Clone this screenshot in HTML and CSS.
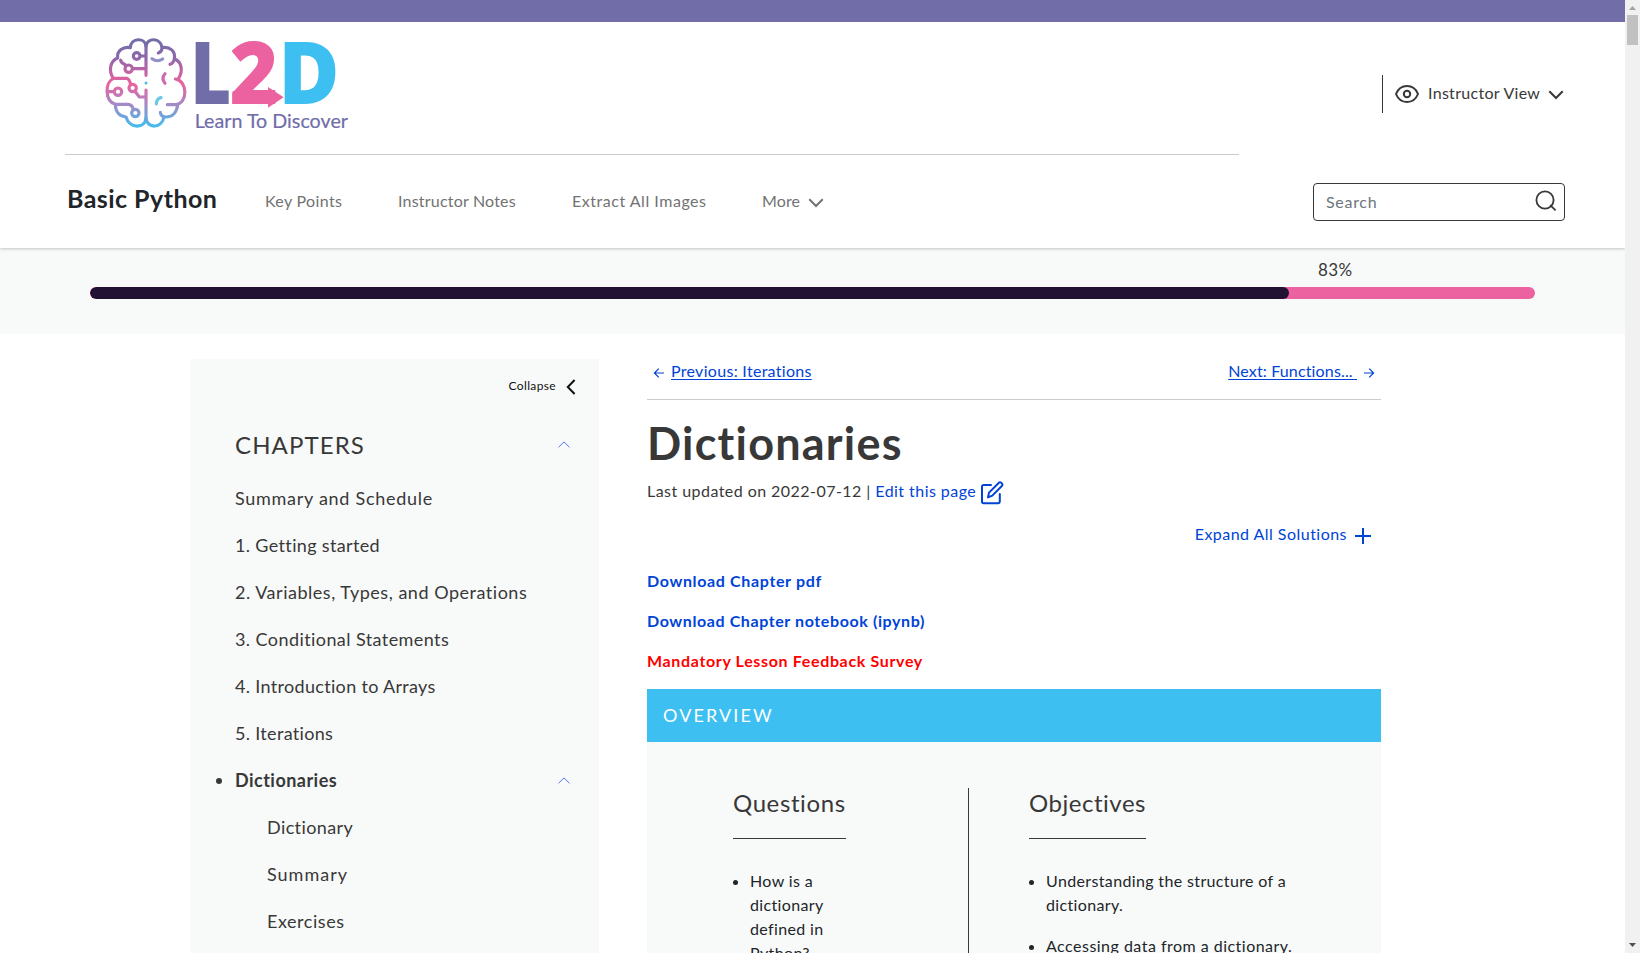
FILE: index.html
```html
<!DOCTYPE html>
<html lang="en">
<head>
<meta charset="utf-8">
<title>Basic Python: Dictionaries</title>
<link rel="stylesheet" href="styles.css">
</head>
<body>
<div class="window">
<div class="page">
  <header class="header">
    <div class="topbar"></div>
    <div class="brand-row">
      <svg class="logo" viewBox="0 6 840 390" role="img" aria-label="L2D Learn To Discover">
        <defs>
          <linearGradient id="brain" gradientUnits="userSpaceOnUse" x1="0" y1="20" x2="0" y2="288">
            <stop offset="0" stop-color="#706da9"/>
            <stop offset="0.2" stop-color="#8c68aa"/>
            <stop offset="0.5" stop-color="#ec619f"/>
            <stop offset="0.72" stop-color="#a788c4"/>
            <stop offset="1" stop-color="#3dbff1"/>
          </linearGradient>
        </defs>
        <g transform="translate(30 37)" fill="none" stroke="url(#brain)" stroke-width="9.5" stroke-linecap="round" stroke-linejoin="round">
          <path d="M138 129V42C136 14 92 16 91 46C70 42 50 55 53 77C31 86 24 114 40 138C14 150 14 206 46 216C46 240 60 253 78 254C88 290 136 290 138 256V173"/>
          <path d="M138 42C140 14 184 16 186 47C186 55 182 60 175 62M186 46C210 42 227 57 223 78C222 88 217 94 210 96M223 79C245 88 250 114 236 138M226 140C262 144 266 214 226 217H202M233 216C231 240 217 254 198 254C188 254 181 248 181 240M192 253C186 290 140 290 138 256"/>
          <circle cx="110" cy="71" r="10"/><path d="M121 71H136"/>
          <circle cx="86" cy="109" r="11"/><path d="M98 109H136M62 83C62 94 74 94 78 100"/>
          <circle cx="54" cy="178" r="11"/><path d="M24 178H42"/>
          <path d="M42 138H80Q88 140 92 156"/><circle cx="98" cy="167" r="11"/><path d="M105 177L118 194H136"/>
          <path d="M48 216H84Q96 216 100 231"/><circle cx="106" cy="242" r="11"/>
          <path stroke="#9290c8" d="M156 79Q172 91 188 80"/>
          <path stroke="#c96bb0" d="M195 124Q183 138 195 153"/>
          <path stroke="#6cc8e6" d="M183 196Q170 198 169 215"/>
        </g>
        <circle cx="168" cy="189" r="4.5" fill="#4ab8e0"/>
        <text class="logo-letter logo-purple" x="301" y="251" textLength="123" lengthAdjust="spacingAndGlyphs">L</text>
        <text class="logo-letter logo-pink" x="419" y="251" textLength="146" lengthAdjust="spacingAndGlyphs">2</text>
        <text class="logo-letter logo-blue" x="565" y="251" textLength="184" lengthAdjust="spacingAndGlyphs">D</text>
        <path class="logo-pink" d="M428 213H534V201L581 232L534 263V251H428z"/>
        <text class="logo-tag logo-purple" x="314" y="323" textLength="460" lengthAdjust="spacingAndGlyphs">Learn To Discover</text>
      </svg>
      <div class="view-switch">
        <svg width="24" height="20" viewBox="0 0 24 20" fill="none" stroke="#383838" stroke-width="2"><path d="M1 10C3 5 7 2 12 2S21 5 23 10C21 15 17 18 12 18S3 15 1 10z"/><circle cx="12" cy="10" r="3.2"/></svg>
        <span class="view-label">Instructor View</span>
        <svg class="chev" width="16" height="10" viewBox="0 0 16 10" fill="none" stroke="#383838" stroke-width="2"><path d="M1.3 1.3L8 8L14.7 1.3"/></svg>
      </div>
    </div>
    <div class="rule"></div>
    <nav class="nav-row">
      <span class="title">Basic Python</span>
      <a class="nav-link n1">Key Points</a>
      <a class="nav-link n2">Instructor Notes</a>
      <a class="nav-link n3">Extract All Images</a>
      <a class="nav-link n4">More <svg width="16" height="10" viewBox="0 0 16 10" fill="none" stroke="#727272" stroke-width="2"><path d="M1.3 1.3L8 8L14.7 1.3"/></svg></a>
      <div class="search"><span>Search</span>
        <svg width="22" height="22" viewBox="0 0 22 22" fill="none" stroke="#383838" stroke-width="1.8"><circle cx="10" cy="10" r="8.6"/><path d="M15.2 15.2L20.6 20.4"/></svg>
      </div>
    </nav>
  </header>

  <section class="progress-wrap">
    <div class="pct">83%</div>
    <div class="track"><div class="fill" style="width:83%"></div></div>
  </section>

  <div class="body-row">
    <aside class="sidebar">
      <div class="collapse">Collapse <svg width="10" height="16" viewBox="0 0 10 16" fill="none" stroke="#111" stroke-width="2"><path d="M8.6 1L1.8 8L8.6 15"/></svg></div>
      <div class="chapters"><span>CHAPTERS</span><svg class="caret" width="12" height="7" viewBox="0 0 12 7"><path d="M.5 6.3L6 .9L11.5 6.3"/></svg></div>
      <ul class="toc">
        <li class="t1">Summary and Schedule</li>
        <li>1. Getting started</li>
        <li class="t3">2. Variables, Types, and Operations</li>
        <li class="t4">3. Conditional Statements</li>
        <li class="t5">4. Introduction to Arrays</li>
        <li class="t5">5. Iterations</li>
        <li class="current"><span>Dictionaries</span><svg class="caret" width="12" height="7" viewBox="0 0 12 7"><path d="M.5 6.3L6 .9L11.5 6.3"/></svg></li>
        <li class="sub">Dictionary</li>
        <li class="sub s2">Summary</li>
        <li class="sub s3">Exercises</li>
      </ul>
    </aside>

    <main class="main">
      <div class="pager">
        <a class="pg"><svg width="12" height="12" viewBox="0 0 12 12"><path d="M11 6H1.6M5.8 1.6L1.4 6L5.8 10.4"/></svg><span class="link prev">Previous: Iterations</span></a>
        <a class="pg"><span class="link next">Next: Functions...&nbsp;</span><svg width="12" height="12" viewBox="0 0 12 12"><path d="M1 6H10.4M6.2 1.6L10.6 6L6.2 10.4"/></svg></a>
      </div>
      <h1>Dictionaries</h1>
      <div class="meta"><span>Last updated on 2022-07-12 |&nbsp;</span><a class="edit">Edit this page</a>
        <svg width="24" height="24" viewBox="0 0 24 24" fill="none" stroke="#0044d7" stroke-width="2" stroke-linecap="round" stroke-linejoin="round"><path d="M11 4H3.5A1.6 1.6 0 0 0 2 5.6V20.6A1.6 1.6 0 0 0 3.6 22.2H18.2A1.6 1.6 0 0 0 19.8 20.6V13"/><path d="M18.4 2.2A1.95 1.95 0 0 1 21.8 5L12.3 14.6L8 16.4L9 11.6z"/></svg>
      </div>
      <div class="expand">Expand All Solutions <svg width="16" height="16" viewBox="0 0 16 16"><path d="M0 8H16M8 0V16"/></svg></div>
      <p class="dl">Download Chapter pdf</p>
      <p class="dl notebook">Download Chapter notebook (ipynb)</p>
      <p class="dl red">Mandatory Lesson Feedback Survey</p>
      <section class="overview">
        <h2>OVERVIEW</h2>
        <div class="cols">
          <div class="col questions">
            <h3>Questions</h3>
            <ul class="points"><li>How is a<br>dictionary<br>defined in<br>Python?</li></ul>
          </div>
          <div class="col objectives">
            <h3>Objectives</h3>
            <ul class="points"><li>Understanding the structure of a<br>dictionary.</li><li class="p2">Accessing data from a dictionary.</li></ul>
          </div>
        </div>
      </section>
    </main>
  </div>
</div>
<div class="scrollbar">
  <svg width="15" height="15" viewBox="0 0 15 15"><path fill="#a3a3a3" d="M4 10L7.5 6L11 10z"/></svg>
  <div class="thumb"></div>
  <svg class="down" width="15" height="15" viewBox="0 0 15 15"><path fill="#505050" d="M4 5L7.5 9L11 5z"/></svg>
</div>
</div>
</body>
</html>
```
FILE: styles.css
```css
* { box-sizing: border-box; }
body { margin: 0; overflow: hidden; background: #fff; color: #383838; font: 400 16px/24px Lato, "Open Sans", sans-serif; letter-spacing: .42px; }
svg { flex: none; display: block; }
ul, h1, h2, h3, p { margin: 0; padding: 0; list-style: none; font-weight: 400; }
.window { display: flex; height: 953px; overflow: hidden; }
.page { width: 1625px; height: 953px; overflow: hidden; }

.header { height: 248px; position: relative; background: #fff; box-shadow: 0 1px 3px rgba(0,0,0,.22); }
.topbar { height: 22px; background: #706da9; }
.brand-row { height: 132px; display: flex; justify-content: space-between; padding: 0 61px 0 90px; }
.logo { width: 280px; height: 130px; overflow: visible; }
.logo-letter { font: 800 258px "Open Sans", sans-serif; letter-spacing: 0; }
.logo-tag { font: 400 60px Lato, sans-serif; letter-spacing: 0; stroke: #706da9; stroke-width: .6; }
.logo-purple { fill: #706da9; }
.logo-pink { fill: #ec619f; }
.logo-blue { fill: #3dbff1; }
.view-switch { display: flex; align-items: center; height: 38px; margin-top: 53px; border-left: 1px solid #383838; padding-left: 12px; }
.view-label { margin: -2px 8px 0 9px; width: 112px; white-space: nowrap; letter-spacing: .3px; }
.view-switch .chev { margin-top: 2px; }
.rule { width: 1174px; height: 1px; margin-left: 65px; background: #ccc; }
.nav-row { display: flex; padding: 28px 60px 0 67px; color: #727272; }
.title { width: 198px; line-height: 31px; font-size: 25px; font-weight: 700; color: #212529; letter-spacing: .45px; }
.nav-link { line-height: 36px; white-space: nowrap; }
.n1 { width: 133px; letter-spacing: .35px; }
.n2 { width: 174px; letter-spacing: .2px; }
.n3 { width: 190px; letter-spacing: .53px; }
.n4 { display: flex; align-items: center; height: 36px; gap: 8px; letter-spacing: .1px; }
.n4 svg { margin-top: 3px; }
.search { margin-left: auto; width: 252px; height: 38px; border: 1px solid #383838; border-radius: 4px; display: flex; align-items: center; justify-content: space-between; padding: 0 7px 0 12px; color: #6c757d; letter-spacing: .7px; }
.search svg { margin-top: -2px; }

.progress-wrap { height: 86px; background: #f8faf9; padding: 10px 90px 0; }
.pct { margin-left: 1228px; font-size: 17px; letter-spacing: .4px; }
.track { height: 12px; margin-top: 5px; border-radius: 6px; background: #ec619f; overflow: hidden; }
.fill { height: 12px; border-radius: 6px; background: #211233; }

.body-row { display: flex; gap: 48px; padding: 25px 0 0 190px; }
.sidebar { width: 409px; height: 640px; background: #f8faf9; padding: 15px 23px 0 45px; }
.collapse { display: flex; justify-content: flex-end; align-items: center; gap: 10px; font-size: 12px; color: #111; letter-spacing: .35px; }
.collapse svg { margin-top: 1px; }
.chapters { display: flex; align-items: center; justify-content: space-between; height: 36px; margin-top: 29px; padding-right: 6px; font-size: 24px; letter-spacing: 1.1px; }
.chapters .caret { margin-top: -1px; }
.caret path { fill: none; stroke: #4a7ae6; stroke-width: 1; }
.toc { margin-top: 12px; font-size: 18px; }
.toc li { height: 47px; line-height: 47px; letter-spacing: .35px; }
.toc .t1 { letter-spacing: .72px; }
.toc .t3 { letter-spacing: .52px; }
.toc .t4 { letter-spacing: .42px; }
.toc .t5 { letter-spacing: .32px; }
.toc .current { display: flex; align-items: center; justify-content: space-between; padding-right: 6px; margin-left: -19px; font-weight: 700; letter-spacing: .47px; }
.current::before { content: ""; width: 6px; height: 6px; border-radius: 50%; background: #383838; margin-right: 13px; }
.current span { flex: 1; }
.toc .sub { padding-left: 32px; letter-spacing: .4px; }
.toc .s2 { letter-spacing: 1px; }
.toc .s3 { letter-spacing: .55px; }

.main { width: 734px; }
.pager { display: flex; justify-content: space-between; height: 41px; border-bottom: 1px solid #ccc; padding: 0 6px; color: #0044d7; }
.pg { display: flex; gap: 6px; }
.pg svg { margin-top: 8px; fill: none; stroke: #0044d7; stroke-width: 1.2; overflow: visible; }
.link { text-decoration: underline; text-underline-offset: 2px; letter-spacing: .3px; }
.link.next { letter-spacing: .15px; }
h1 { height: 57px; line-height: 57px; margin-top: 15px; font-size: 45px; font-weight: 700; letter-spacing: 1.2px; }
.meta { display: flex; height: 24px; margin-top: 7px; letter-spacing: .45px; }
.meta svg { margin: 2px 0 0 4px; }
.edit { color: #0044d7; }
.expand { display: flex; align-items: center; justify-content: flex-end; gap: 8px; height: 24px; margin-top: 19px; padding-right: 10px; color: #0044d7; letter-spacing: .47px; }
.expand svg { stroke: #0044d7; stroke-width: 2; margin-top: 3px; }
.dl { margin-top: 16px; font-weight: 700; color: #0044d7; letter-spacing: .65px; }
.dl.notebook { letter-spacing: .6px; }
.expand + .dl { margin-top: 23px; }
.dl.red { color: #f00; }
.overview { margin-top: 16px; background: #f8faf9; }
.overview h2 { height: 53px; line-height: 53px; padding-left: 16px; background: #3dbff1; color: #fff; font-size: 18px; letter-spacing: 2.1px; }
.cols { display: flex; padding: 46px 86px 0; }
.col { height: 220px; }
.questions { width: 235px; }
.objectives { flex: 1; border-left: 1px solid #383838; padding-left: 60px; }
h3 { display: inline-block; height: 51px; line-height: 29px; font-size: 24px; letter-spacing: .6px; border-bottom: 1px solid #383838; vertical-align: top; }
.objectives h3 { letter-spacing: .52px; }
.points { margin-top: 30px; color: #212529; }
.points li { position: relative; padding-left: 17px; margin-bottom: 17px; letter-spacing: .36px; }
.points .p2 { letter-spacing: .48px; }
.points li::before { content: ""; position: absolute; left: 0; top: 11px; width: 5px; height: 5px; border-radius: 50%; background: #212529; }

.scrollbar { width: 15px; display: flex; flex-direction: column; background: #f1f1f1; }
.thumb { width: 11px; height: 30px; margin: 0 2px; background: #c1c1c1; }
.down { margin-top: auto; }
```
